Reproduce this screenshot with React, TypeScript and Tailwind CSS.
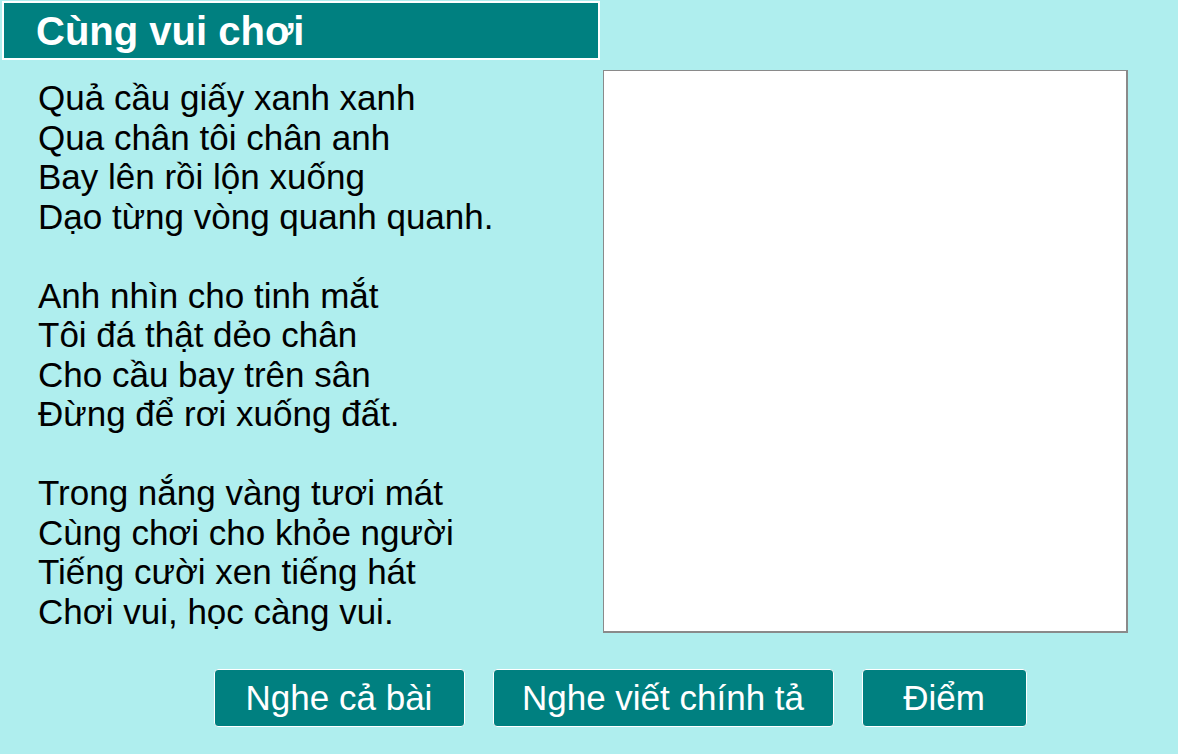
import React from 'react'

const stanzas = [
  ['Quả cầu giấy xanh xanh', 'Qua chân tôi chân anh', 'Bay lên rồi lộn xuống', 'Dạo từng vòng quanh quanh.'],
  ['Anh nhìn cho tinh mắt', 'Tôi đá thật dẻo chân', 'Cho cầu bay trên sân', 'Đừng để rơi xuống đất.'],
  ['Trong nắng vàng tươi mát', 'Cùng chơi cho khỏe người', 'Tiếng cười xen tiếng hát', 'Chơi vui, học càng vui.'],
]

const buttons = [
  { label: 'Nghe cả bài', w: 'w-[251px]' },
  { label: 'Nghe viết chính tả', w: 'w-[341px]' },
  { label: 'Điểm', w: 'w-[165px]' },
]

export default function App() {
  return (
    <div className="w-[1178px] h-[754px] bg-[#afeeee] font-[family-name:Liberation_Sans,Arial,sans-serif] text-black overflow-hidden">
      {/* title bar */}
      <div className="pt-[1px] pl-[2px]">
        <div className="w-[598px] h-[59px] bg-[#008080] border-2 border-white flex items-center pl-[32px]">
          <h1 className="text-[40px] font-bold text-white leading-none">Cùng vui chơi</h1>
        </div>
      </div>

      <div className="flex pt-[10px]">
        {/* poem */}
        <div className="w-[603px] pl-[38px] pt-[8px] text-[35px] leading-[39.5px]">
          {stanzas.map((lines, i) => (
            <div key={i} className={i > 0 ? 'mt-[39.5px]' : ''}>
              {lines.map((l) => (
                <p key={l}>{l}</p>
              ))}
            </div>
          ))}
        </div>

        {/* answer box */}
        <textarea className="w-[525px] h-[563px] bg-white border border-r-2 border-b-2 border-[#8a8a8a] resize-none outline-none" />
      </div>

      <div className="flex justify-center gap-[28px] pl-[62px] pt-[36px]">
        {buttons.map((b) => (
          <button
            key={b.label}
            className={`${b.w} h-[58px] bg-[#008080] border border-white rounded-[4px] text-white text-[35px]`}
          >
            {b.label}
          </button>
        ))}
      </div>
    </div>
  )
}
